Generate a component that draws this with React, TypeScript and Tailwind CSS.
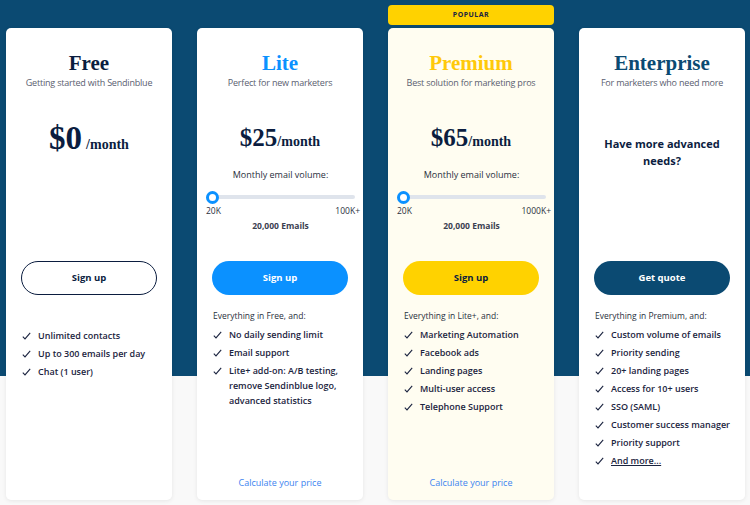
import React from "react"

const serif = { fontFamily: '"Liberation Serif", "Times New Roman", serif' }
const sans = { fontFamily: '"Open Sans", "Noto Sans", sans-serif' }

type Plan = {
  name: string
  tagline: string
  titleColor: string
  bg: string
  price?: string
  big?: boolean
  max?: string
  button: string
  buttonClass: string
  intro?: string
  features: string[]
  calc?: boolean
  popular?: boolean
}

const plans: Plan[] = [
  {
    name: "Free",
    tagline: "Getting started with Sendinblue",
    titleColor: "text-[#0b1d3f]",
    bg: "bg-white",
    price: "$0",
    big: true,
    button: "Sign up",
    buttonClass: "border border-[#0b1d3f] text-[#0b1d3f] bg-white",
    features: ["Unlimited contacts", "Up to 300 emails per day", "Chat (1 user)"],
  },
  {
    name: "Lite",
    tagline: "Perfect for new marketers",
    titleColor: "text-[#0b91ff]",
    bg: "bg-white",
    price: "$25",
    max: "100K+",
    button: "Sign up",
    buttonClass: "bg-[#0b91ff] text-white",
    intro: "Everything in Free, and:",
    features: [
      "No daily sending limit",
      "Email support",
      "Lite+ add-on: A/B testing, remove Sendinblue logo, advanced statistics",
    ],
    calc: true,
  },
  {
    name: "Premium",
    tagline: "Best solution for marketing pros",
    titleColor: "text-[#ffc90a]",
    bg: "bg-[#fffdf1]",
    price: "$65",
    max: "1000K+",
    button: "Sign up",
    buttonClass: "bg-[#ffd200] text-[#0b1d3f]",
    intro: "Everything in Lite+, and:",
    features: [
      "Marketing Automation",
      "Facebook ads",
      "Landing pages",
      "Multi-user access",
      "Telephone Support",
    ],
    calc: true,
    popular: true,
  },
  {
    name: "Enterprise",
    tagline: "For marketers who need more",
    titleColor: "text-[#0b4a72]",
    bg: "bg-white",
    button: "Get quote",
    buttonClass: "bg-[#0b4a72] text-white",
    intro: "Everything in Premium, and:",
    features: [
      "Custom volume of emails",
      "Priority sending",
      "20+ landing pages",
      "Access for 10+ users",
      "SSO (SAML)",
      "Customer success manager",
      "Priority support",
      "And more...",
    ],
  },
]

function Check() {
  return (
    <svg width="9" height="8" viewBox="0 0 9 8" className="mt-[4px] shrink-0">
      <path d="M0.8 4.6 L3 6.9 L8.2 0.8" fill="none" stroke="#1b2440" strokeWidth="1.1" />
    </svg>
  )
}

function Card({ plan }: { plan: Plan }) {
  return (
    <div className="relative w-[166px] shrink-0">
      {plan.popular && (
        <div className="absolute -top-[23px] left-0 right-0 h-[20px] rounded-[4px] bg-[#ffd200] flex items-center justify-center text-[7px] font-bold tracking-[0.5px] text-[#1b2440]">
          POPULAR
        </div>
      )}
      <div
        className={`${plan.bg} h-[472px] rounded-[5px] shadow-[0_1px_4px_rgba(0,0,0,0.08)] flex flex-col pt-[22px] pb-[10px]`}
        style={sans}
      >
        <div className={`text-center text-[21px] leading-[26px] font-bold ${plan.titleColor}`} style={serif}>
          {plan.name}
        </div>
        <div className="text-center text-[9px] leading-[14px] text-[#5a6070] tracking-[-0.2px]">{plan.tagline}</div>

        <div className="h-[171px] flex flex-col items-center">
          {plan.price ? (
            <>
              <div className="mt-[30px] h-[36px] flex items-baseline justify-center text-[#0b1d3f] font-bold" style={serif}>
                <span className={plan.big ? "text-[33px] leading-[36px]" : "text-[25px] leading-[36px]"}>{plan.price}</span>
                <span className={plan.big ? "text-[14px] ml-[4px]" : "text-[14px]"}>/month</span>
              </div>
              {plan.max && (
                <div className="w-full pl-[9px] pr-[8px]">
                  <div className="mt-[12px] text-center text-[9px] leading-[14px] text-[#2a3040]">Monthly email volume:</div>
                  <div className="mt-[8px] h-[14px] relative flex items-center">
                    <div className="w-full h-[4px] rounded-full bg-[#dfe4ec]" />
                    <div className="absolute left-0 top-[0.5px] w-[13px] h-[13px] rounded-full border-[3px] border-[#0b91ff] bg-white" />
                  </div>
                  <div className="mt-[1px] -mr-[5px] flex justify-between text-[8.5px] leading-[12px] text-[#2a3040]">
                    <span>20K</span>
                    <span>{plan.max}</span>
                  </div>
                  <div className="mt-[3px] text-center text-[8.5px] leading-[12px] font-bold text-[#3a4050]">20,000 Emails</div>
                </div>
              )}
            </>
          ) : (
            <div className="mt-[45px] text-center text-[11px] leading-[17px] font-bold text-[#0b1d3f] px-[10px]">
              Have more advanced needs?
            </div>
          )}
        </div>

        <div className="px-[15px]">
          <div
            className={`h-[34px] rounded-full flex items-center justify-center text-[9.5px] font-bold ${plan.buttonClass}`}
          >
            {plan.button}
          </div>
        </div>

        {plan.intro ? (
          <div className="mt-[14px] px-[16px] text-[8.5px] leading-[14px] text-[#2a3040]">{plan.intro}</div>
        ) : (
          <div className="h-[29px]" />
        )}

        <div className="mt-[4px] pl-[16px] pr-[8px] flex flex-col gap-[3px]">
          {plan.features.map((f) => (
            <div key={f} className="flex gap-[7px]">
              <Check />
              <span
                className={`text-[9px] leading-[15px] font-semibold text-[#1b2440] ${
                  f === "And more..." ? "underline" : ""
                }`}
              >
                {f}
              </span>
            </div>
          ))}
        </div>

        <div className="flex-1" />
        {plan.calc && (
          <div className="text-center text-[9px] leading-[14px] text-[#3c84f0]">Calculate your price</div>
        )}
      </div>
    </div>
  )
}

export default function App() {
  return (
    <div className="w-[750px] h-[505px] overflow-hidden bg-[linear-gradient(to_bottom,#0b4a72_376px,#f9f9f9_376px)]">
      <div className="flex gap-[25px] pl-[6px] pt-[28px]">
        {plans.map((p) => (
          <Card key={p.name} plan={p} />
        ))}
      </div>
    </div>
  )
}
